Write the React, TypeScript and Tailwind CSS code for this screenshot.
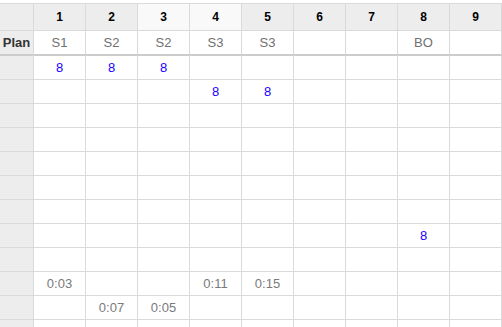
const cols = [1, 2, 3, 4, 5, 6, 7, 8, 9];
const plan = ['S1', 'S2', 'S2', 'S3', 'S3', '', '', 'BO', ''];

type Cell = { v: string; kind: 'num' | 'time' };

// row index -> column index (1-based) -> value
const data: Record<number, Record<number, Cell>> = {
  0: { 1: { v: '8', kind: 'num' }, 2: { v: '8', kind: 'num' }, 3: { v: '8', kind: 'num' } },
  1: { 4: { v: '8', kind: 'num' }, 5: { v: '8', kind: 'num' } },
  7: { 8: { v: '8', kind: 'num' } },
  9: {
    1: { v: '0:03', kind: 'time' },
    4: { v: '0:11', kind: 'time' },
    5: { v: '0:15', kind: 'time' },
  },
  10: { 2: { v: '0:07', kind: 'time' }, 3: { v: '0:05', kind: 'time' } },
};

const rows = Array.from({ length: 12 }, (_, i) => i);

export default function App() {
  return (
    <div
      className="h-[327px] w-[502px] overflow-hidden bg-white pt-[3px] text-[13px]"
      style={{ fontFamily: '"Liberation Sans", Arial, sans-serif' }}
    >
      <div className="flex">
        <div className="h-[28px] w-[34px] border-y border-r border-[#dadada] bg-[#ededed]" />
        {cols.map((c) => (
          <div
            key={c}
            className={`flex h-[28px] w-[52px] items-center justify-center border-y border-r border-[#dadada] text-[12px] font-bold text-black ${
              c === 3 || c === 4 ? 'bg-[#f9f9f9]' : 'bg-[#ededed]'
            }`}
          >
            {c}
          </div>
        ))}
      </div>
      <div className="flex">
        <div className="flex h-[25px] w-[34px] items-center justify-center border-r border-b-2 border-r-[#dadada] border-b-[#cccccc] bg-[#ededed] font-bold text-[#333]">
          Plan
        </div>
        {plan.map((p, i) => (
          <div
            key={i}
            className="flex h-[25px] w-[52px] items-center justify-center border-r border-b-2 border-r-[#dadada] border-b-[#cccccc] text-[#707070]"
          >
            {p}
          </div>
        ))}
      </div>
      {rows.map((r) => (
        <div key={r} className="flex">
          <div className="h-[24px] w-[34px] border-r border-b border-[#dadada] bg-[#ededed]" />
          {cols.map((c) => {
            const cell = data[r]?.[c];
            return (
              <div
                key={c}
                className={`flex h-[24px] w-[52px] items-center justify-center border-r border-b border-[#dadada] ${
                  cell?.kind === 'num' ? 'text-[#2200ff]' : 'text-[#7a7a7a]'
                }`}
              >
                {cell?.v}
              </div>
            );
          })}
        </div>
      ))}
    </div>
  );
}
